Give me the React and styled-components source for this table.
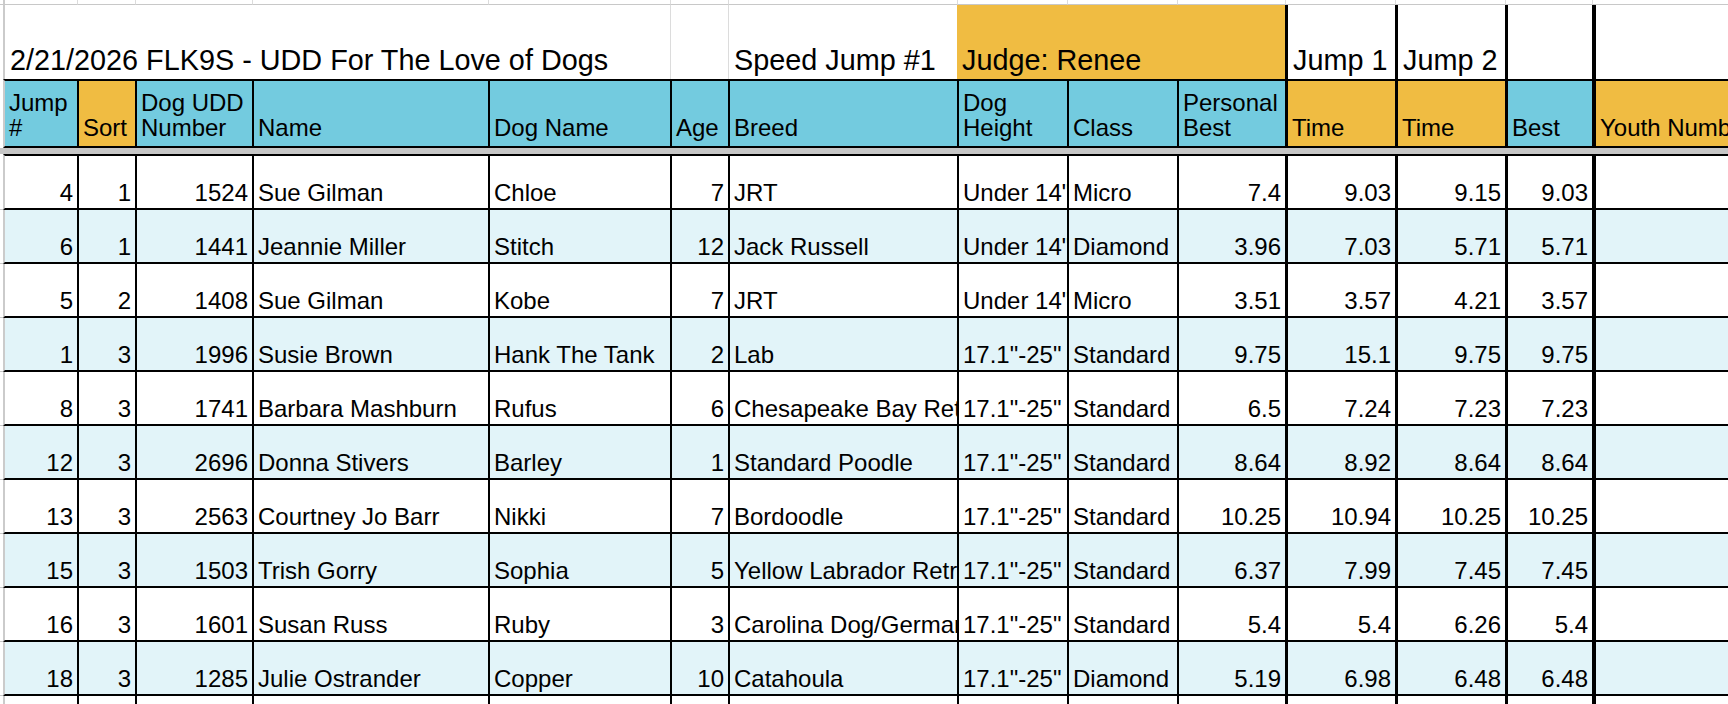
import React from "react";
import styled, { createGlobalStyle } from "styled-components";

const GlobalStyle = createGlobalStyle`
  html, body {
    margin: 0;
    padding: 0;
    background: #fff;
  }
  body {
    overflow: hidden;
    font-family: "Liberation Sans", Arial, sans-serif;
    color: #000;
  }
`;

// 3px sliver of the row headers, then the 14 sheet columns
const COLS =
  "3px 74px 58px 117px 236px 182px 58px 229px 110px 110px 108px 110px 110px 87px 200px";

const BLUE = "#73cbdf";
const ORANGE = "#f0bc42";
const STRIPE = "#e2f4f9";

const edges = {
  gutter: "2px solid #cbcbcb",
  grid: "1px solid #dcdcdc",
  none: "0 none",
  line: "2px solid #000",
  thick: "3px solid #000",
  heavy: "4px solid #000",
};

const Sheet = styled.div`
  width: 100%;
  height: 704px;
  overflow: hidden;
`;

const Row = styled.div`
  display: grid;
  grid-template-columns: ${COLS};
  height: ${(p) => p.$h}px;
  background: ${(p) => (p.$alt ? STRIPE : "#fff")};
`;

const Gutter = styled.div`
  box-sizing: border-box;
  background: #fff;
  border-bottom: ${(p) => (p.$rule ? "1px solid #c8c8c8" : "0 none")};
`;

const BaseCell = styled.div`
  box-sizing: border-box;
  min-width: 0;
  overflow: hidden;
  white-space: nowrap;
  display: flex;
  align-items: flex-end;
  justify-content: ${(p) => (p.$right ? "flex-end" : "flex-start")};
  border-left: ${(p) => edges[p.$edge || "line"]};
  background: ${(p) => p.$bg || "transparent"};
  grid-column: ${(p) => (p.$span ? `span ${p.$span}` : "auto")};
`;

const StubCell = styled(BaseCell)`
  border-bottom: 1px solid #c8c8c8;
`;

const TitleCell = styled(BaseCell)`
  padding: 0 5px 3px;
  font-size: 28.8px;
  line-height: 32px;
`;

const HeadCell = styled(BaseCell)`
  flex-direction: column;
  align-items: flex-start;
  justify-content: flex-end;
  padding: 0 4px 6px;
  border-top: 2px solid #000;
  border-bottom: 2px solid #000;
  font-size: 24px;
  line-height: 25px;
`;

const DataCell = styled(BaseCell)`
  padding: 0 4px 3px;
  border-top: ${(p) => (p.$top ? "2px solid #000" : "0 none")};
  border-bottom: 2px solid #000;
  font-size: 24px;
  line-height: 25px;
`;

const FreezeBand = styled.div`
  height: 6px;
  background: #c6c6c6;
`;

const columns = [
  { head: ["Jump", "#"], bg: BLUE, right: true, edge: "gutter" },
  { head: ["Sort"], bg: ORANGE, right: true },
  { head: ["Dog UDD", "Number"], bg: BLUE, right: true },
  { head: ["Name"], bg: BLUE },
  { head: ["Dog Name"], bg: BLUE },
  { head: ["Age"], bg: BLUE, right: true },
  { head: ["Breed"], bg: BLUE },
  { head: ["Dog", "Height"], bg: BLUE },
  { head: ["Class"], bg: BLUE },
  { head: ["Personal", "Best"], bg: BLUE, right: true },
  { head: ["Time"], bg: ORANGE, right: true, edge: "thick" },
  { head: ["Time"], bg: ORANGE, right: true, edge: "thick" },
  { head: ["Best"], bg: BLUE, right: true, edge: "thick" },
  { head: ["Youth Number"], bg: ORANGE, edge: "heavy" },
];

const rows = [
  ["4", "1", "1524", "Sue Gilman", "Chloe", "7", "JRT", 'Under 14"', "Micro", "7.4", "9.03", "9.15", "9.03"],
  ["6", "1", "1441", "Jeannie Miller", "Stitch", "12", "Jack Russell", 'Under 14"', "Diamond", "3.96", "7.03", "5.71", "5.71"],
  ["5", "2", "1408", "Sue Gilman", "Kobe", "7", "JRT", 'Under 14"', "Micro", "3.51", "3.57", "4.21", "3.57"],
  ["1", "3", "1996", "Susie Brown", "Hank The Tank", "2", "Lab", '17.1"-25"', "Standard", "9.75", "15.1", "9.75", "9.75"],
  ["8", "3", "1741", "Barbara Mashburn", "Rufus", "6", "Chesapeake Bay Retriever", '17.1"-25"', "Standard", "6.5", "7.24", "7.23", "7.23"],
  ["12", "3", "2696", "Donna Stivers", "Barley", "1", "Standard Poodle", '17.1"-25"', "Standard", "8.64", "8.92", "8.64", "8.64"],
  ["13", "3", "2563", "Courtney Jo Barr", "Nikki", "7", "Bordoodle", '17.1"-25"', "Standard", "10.25", "10.94", "10.25", "10.25"],
  ["15", "3", "1503", "Trish Gorry", "Sophia", "5", "Yellow Labrador Retriever", '17.1"-25"', "Standard", "6.37", "7.99", "7.45", "7.45"],
  ["16", "3", "1601", "Susan Russ", "Ruby", "3", "Carolina Dog/German Shepherd", '17.1"-25"', "Standard", "5.4", "5.4", "6.26", "5.4"],
  ["18", "3", "1285", "Julie Ostrander", "Copper", "10", "Catahoula", '17.1"-25"', "Diamond", "5.19", "6.98", "6.48", "6.48"],
  ["", "", "", "", "", "", "", "", "", "", "", "", "", ""],
];

const titleCells = [
  { span: 5, edge: "gutter", text: "2/21/2026 FLK9S - UDD For The Love of Dogs" },
  { edge: "grid" },
  { edge: "grid", text: "Speed Jump #1" },
  { span: 3, edge: "none", bg: ORANGE, text: "Judge: Renee" },
  { edge: "thick", text: "Jump 1" },
  { edge: "thick", text: "Jump 2" },
  { edge: "thick" },
  { edge: "heavy" },
];

export default function App() {
  return (
    <>
      <GlobalStyle />
      <Sheet>
        <Row $h={5}>
          <Gutter $rule />
          {columns.map((c, i) => (
            <StubCell key={i} $edge={i === 0 ? "gutter" : "grid"} />
          ))}
        </Row>

        <Row $h={74}>
          <Gutter />
          {titleCells.map((c, i) => (
            <TitleCell key={i} $span={c.span} $edge={c.edge} $bg={c.bg}>
              {c.text}
            </TitleCell>
          ))}
        </Row>

        <Row $h={69}>
          <Gutter />
          {columns.map((c, i) => (
            <HeadCell key={i} $bg={c.bg} $edge={c.edge}>
              {c.head.map((line) => (
                <span key={line}>{line}</span>
              ))}
            </HeadCell>
          ))}
        </Row>

        <FreezeBand />

        {rows.map((r, ri) => (
          <Row key={ri} $h={ri === 0 ? 56 : 54} $alt={ri % 2 === 1}>
            <Gutter $rule />
            {columns.map((c, ci) => (
              <DataCell key={ci} $right={c.right} $edge={c.edge} $top={ri === 0}>
                {r[ci]}
              </DataCell>
            ))}
          </Row>
        ))}
      </Sheet>
    </>
  );
}
